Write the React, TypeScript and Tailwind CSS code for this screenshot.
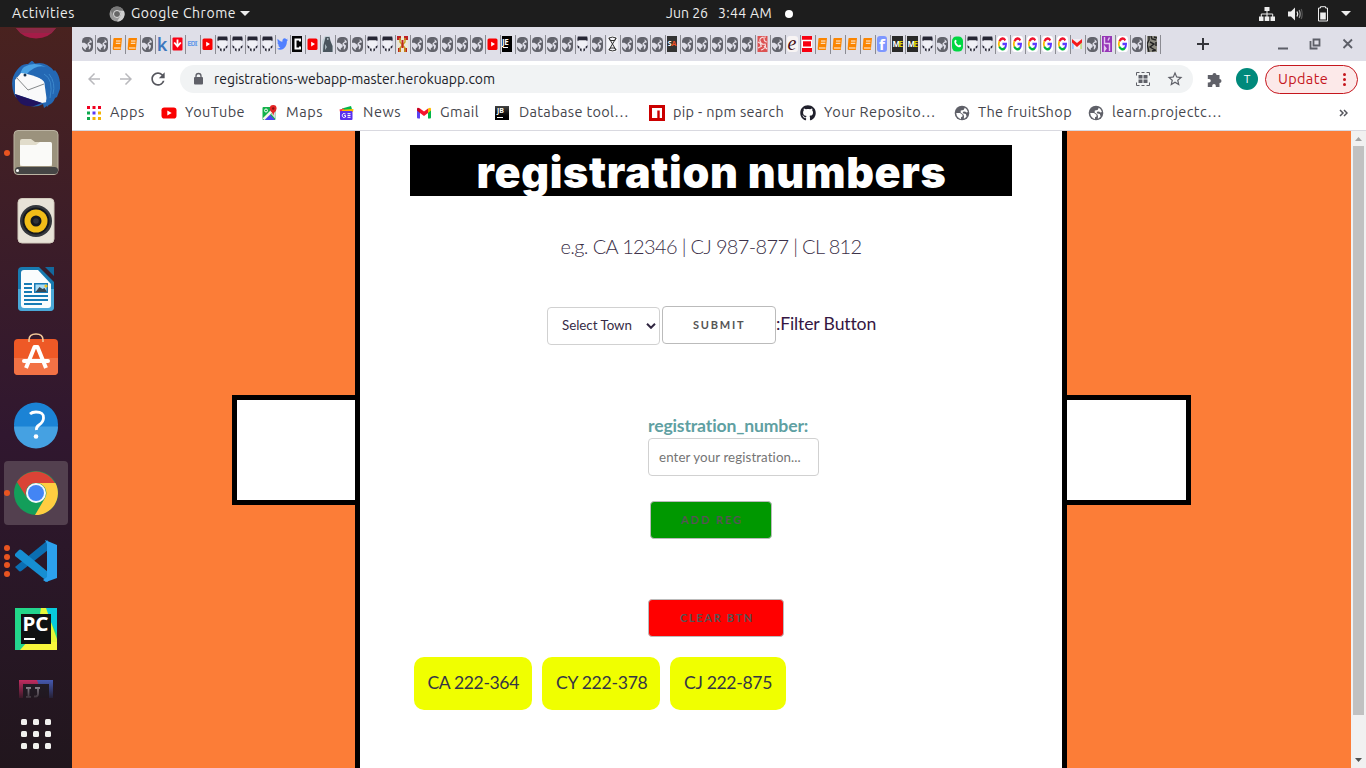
import React, { useLayoutEffect, useRef, type ReactNode } from 'react';
import { MdArrowBack, MdArrowForward, MdRefresh, MdStarBorder } from 'react-icons/md';
import { FaGithub, FaTwitter } from 'react-icons/fa';

const UI = "font-['Ubuntu','Noto_Sans',sans-serif]";
const LATO = "font-['Lato',sans-serif]";

/* Single-line label whose tracking is adjusted so that it spans exactly `w` pixels. */
function Fit({ w, className = '', children }: { w: number; className?: string; children: string }) {
  const ref = useRef<HTMLSpanElement>(null);
  useLayoutEffect(() => {
    const el = ref.current;
    if (!el) return;
    el.style.letterSpacing = '0px';
    const natural = el.getBoundingClientRect().width;
    el.style.letterSpacing = `${(w - natural) / children.length}px`;
  }, [w, children]);
  return (
    <span ref={ref} className={`inline-block shrink-0 whitespace-pre ${className}`}>
      {children}
    </span>
  );
}

function GoogleG() {
  return (
    <svg viewBox="0 0 16 16" preserveAspectRatio="none" className="h-4 w-[11px]">
      <rect width="16" height="16" rx="4" fill="#fff" />
      <g fill="none" strokeWidth="2.6">
        <path d="M12.2 4.4A5.4 5.4 0 0 0 3.4 5.4" stroke="#f0102a" />
        <path d="M3.4 5.2a5.4 5.4 0 0 0 0 5.6" stroke="#fbbc05" />
        <path d="M3.3 10.6a5.4 5.4 0 0 0 8.4 1.2" stroke="#00b83c" />
        <path d="M8 8h5.2a5.4 5.4 0 0 1-1.8 4" stroke="#5a38ff" />
      </g>
    </svg>
  );
}

function TabIcon({ k }: { k: string }) {
  switch (k) {
    case 'g':
      return (
        <svg viewBox="0 0 11 15" className="h-[15px] w-[11px]">
          <rect width="11" height="15" rx="4.5" fill="#62636b" />
          <path d="M0 5.800H2.500L5.600 8V10L3.800 11.200V13L2.300 12.200 0 9.500Z" fill="#dfdfe8" />
          <path d="M7.600 2.200 9.800 4.500V5.600L7.400 6 7 7 9 8.600 8.600 10.800 7.400 12.600 6.600 12.200 7 9.800 5.600 8 5.600 6.200 7.800 4.400Z" fill="#dfdfe8" />
        </svg>
      );
    case 'b':
      return (
        <svg viewBox="0 0 11 14" className="h-[14px] w-[11px]">
          <path d="M2.2 1H10L8.8 13H1.6Q.6 13 .7 11.6L1.4 2Q1.5 1 2.2 1Z" fill="#fb8500" />
          <path d="M4 4h4.500M3.800 6.300h4.500M2 11h6.500" stroke="#fff" strokeWidth=".9" />
        </svg>
      );
    case 'k':
      return <span className="text-[18px] leading-4 font-semibold text-[#3c78be] font-['Noto_Sans',sans-serif]">k</span>;
    case 'd':
      return (
        <svg viewBox="0 0 11 14" className="h-[14px] w-[11px]">
          <rect x=".5" width="10" height="13" y=".5" rx="1" fill="#fa0012" />
          <path d="M5.5 2.5v6M2.200 5.500l3.300 3.800 3.300-3.800" stroke="#fff" strokeWidth="1.800" fill="none" />
        </svg>
      );
    case 'i':
      return <span className="text-[7px] leading-4 font-bold tracking-[-0.8px] text-[#699ce8] font-['Noto_Sans',sans-serif]">EDI</span>;
    case 'y':
      return (
        <svg viewBox="0 0 11 14" className="h-[14px] w-[11px]">
          <rect x=".5" y="1.5" width="10" height="11.5" rx="1.5" fill="#f80000" />
          <path d="M4.2 4.8v4.6L8 7.1z" fill="#fff" />
        </svg>
      );
    case 'o':
      return (
        <svg viewBox="0 0 11 16" className="h-4 w-[11px]">
          <path d="M2.500 3.500Q.2 6 1.600 10l2 1V15h3.800v-4l2-1Q10.800 6 8.500 3.500z" fill="#f1f1f6" />
          <path d="M.8.5H10.200Q10.900 2.500 10.400 5L8.800 4.200H2.200L.6 5Q.1 2.500.8.500ZM.3 9.300l2 1.300v2.200L.8 11.800ZM10.700 9.300l-2 1.300v2.200l1.500-1ZM3 12.500h1.600V15.500L3 14.500zM8 12.500H6.400V15.500L8 14.500z" fill="#252533" />
        </svg>
      );
    case 't':
      return <FaTwitter className="h-[14px] w-[11px] text-[#5080ff]" preserveAspectRatio="none" />;
    case 'c':
      return (
        <svg viewBox="0 0 10 16" className="h-4 w-[10px]">
          <rect width="10" height="16" fill="#060606" />
          <path d="M8 5.500V3.500H3.500v9H8V10.500" fill="none" stroke="#fff" strokeWidth="2" />
        </svg>
      );
    case 'w':
      return (
        <svg viewBox="0 0 11 16" className="h-4 w-[11px]">
          <path d="M0 5l3-5h5v5l3 5v6H0z" fill="#c4d0d6" />
          <path d="M3.500 1h4l1 4 2 5v6H1L1.500 9z" fill="#4a555d" />
          <path d="M5 2h1.500v2H5zM3 8l2 3-2 3z" fill="#a8b6bc" />
        </svg>
      );
    case 'x':
      return (
        <svg viewBox="0 0 11 16" className="h-4 w-[11px]">
          <rect width="11" height="16" fill="#ece8d6" />
          <path d="M0 0h4v4H0zM7 0h4v4H7zM1 12h3v4H1zM7 12h3v4H7z" fill="#bd2024" />
          <path d="M3 2v4l5 6v4M8 2v4l-5 6v4" stroke="#c9a51c" strokeWidth="1.4" fill="none" />
          <path d="M4.5 4h2v8h-2z" fill="#c22525" />
        </svg>
      );
    case 'j':
      return (
        <span className="flex h-4 w-[10px] flex-col items-start overflow-hidden bg-black text-[8px] leading-[11px] font-bold tracking-[-0.5px] text-white font-['Noto_Sans',sans-serif]">
          JE
          <span className="ml-px block h-px w-[5px] bg-white" />
        </span>
      );
    case 'h':
      return (
        <svg viewBox="0 0 11 16" className="h-4 w-[11px]">
          <rect width="11" height="16" rx="4" fill="#f4f4f8" />
          <path d="M1.800 2Q5.500.2 9.200 2M1.800 14Q5.500 15.800 9.200 14M2 2 9 14M9 2 2 14M2 2l1 2.500h5L9 2M2 14l1.500-2h4L9 14" fill="none" stroke="#333" strokeWidth="1" />
        </svg>
      );
    case 's':
      return (
        <span className="flex h-4 w-[10px] items-center justify-center bg-[#333] text-[7px] font-bold text-white font-['Noto_Sans',sans-serif]">
          S<span className="text-[#f05023]">A</span>
        </span>
      );
    case 'r':
      return (
        <svg viewBox="0 0 11 16" className="h-4 w-[11px]">
          <rect x=".5" width="10" height="16" fill="#dc5252" />
          <path d="M9 1Q2 1 3 5t5 3q2 4-4 6M1 6q3 1 3 4M7 2q0 4 3 4M7 10l3 3M1 12l4-2" stroke="#f5dede" fill="none" strokeWidth="1.1" />
        </svg>
      );
    case 'e':
      return (
        <span className="flex h-4 w-[11px] items-center justify-center rounded-[3px] bg-[#f8f4f4] pb-[3px] text-[20px] leading-4 text-[#481018] italic font-['Liberation_Serif',serif]">e</span>
      );
    case 'z':
      return (
        <svg viewBox="0 0 10 16" className="h-4 w-[10px]">
          <rect width="10" height="16" fill="#f80010" />
          <path d="M0 3.8h10v1.500H0zM0 10.500h10v1.500H0zM0 5h1v6H0zM9 5h1v6H9z" fill="#fff" />
        </svg>
      );
    case 'f':
      return (
        <span className="flex h-4 w-[10px] items-end justify-center rounded-[3px] bg-[#7e97ff] text-[15px] leading-[16px] font-bold text-white font-['Noto_Sans',sans-serif]">f</span>
      );
    case 'm':
      return (
        <span className="flex h-4 w-[11px] items-center justify-center overflow-hidden bg-[#292929] text-[8px] font-bold tracking-[-1.5px] text-white font-['Noto_Sans',sans-serif]">
          M<span className="text-[#d9d900]">E</span>
        </span>
      );
    case 'a':
      return (
        <svg viewBox="0 0 11 16" className="h-4 w-[11px]">
          <rect y=".5" width="11" height="15" rx="4.5" fill="#00d742" />
          <path d="M2.8 4.2Q4 3 4.6 5L4 6.6q1 2 2.7 2.8L8 8.5l1.3 1.2Q8.2 12 6 11 2.4 9 2.3 5.5Z" fill="#fff" />
        </svg>
      );
    case 'G':
      return <GoogleG />;
    case 'M':
      return (
        <svg viewBox="0 0 10 12" className="h-[12px] w-[10px]">
          <rect width="10" height="10" y="1" fill="#f1eef5" />
          <path d="M0 2v9h1.8V3.5z" fill="#98c8ff" />
          <path d="M10 2v9H8.200V3.500z" fill="#c3dc8d" />
          <path d="M0 1l5 4 5-4v3.500L5 9 0 4.500z" fill="#f5191c" />
        </svg>
      );
    case 'p':
      return (
        <svg viewBox="0 0 10 16" className="h-4 w-[10px]">
          <rect width="10" height="16" fill="#9635b7" />
          <path d="M2.500 1v6.500H7.500V15M7.500 1.500 6 4.500M2.500 10.500v4l1.500-2z" stroke="#e4c8f0" strokeWidth="1.400" fill="none" />
        </svg>
      );
    default:
      return (
        <svg viewBox="0 0 10 16" className="h-4 w-[10px]">
          <rect width="10" height="16" fill="#8c8b80" />
          <path d="M2 0v4l-2 4 2 8M4 0l1 3 4 1M3 6l4 2-4 3 5 3M9 6v4M5 15l4-1M7 1l3 1" stroke="#222" strokeWidth="1.400" fill="none" />
        </svg>
      );
  }
}

const TABS = 'ggbbgkdiyooootcywggooxgggggyjggggoghgggsgggggrgezbbbbfmmogaooGGGGGMgpGgn'.split('');

const GlobeIcon = () => (
  <svg viewBox="0 0 16 16" className="size-4">
    <circle cx="8" cy="8" r="7.300" fill="#5f6068" />
    <path d="M2.200 8H6L8.500 9.800V11.600L7 12.200V14.200L4.800 13Q2.200 11 2.200 8Z" fill="#fff" />
    <path d="M10.800 2.800Q13.200 4.200 13.900 7L12.500 7.400 11 6.400 9 6.800 8.800 8.200 11.800 9 12.600 11.400Q11 13.400 9.800 13.700L10 11 9.400 9.400 6.600 7.600 6.800 5.600 9.600 5Z" fill="#fff" />
  </svg>
);

const BOOKMARKS: { name: string; slot: string; w: number; icon: ReactNode }[] = [
  {
    name: 'Apps', slot: 'w-[75px]', w: 35,
    icon: (
      <svg viewBox="0 0 16 16" className="size-4">
        <path d="M1 1h3v3H1zM6.500 1h3v3h-3zM12 1h3v3h-3z" fill="#f00020" />
        <path d="M1 6.500h3v3H1zM1 12h3v3H1z" fill="#0ca84c" />
        <path d="M6.500 6.500h3v3h-3z" fill="#5a35f5" />
        <path d="M12 6.500h3v3h-3zM6.500 12h3v3h-3zM12 12h3v3h-3z" fill="#f4b400" />
      </svg>
    ),
  },
  {
    name: 'YouTube', slot: 'w-[101px]', w: 60,
    icon: (
      <svg viewBox="0 0 16 16" className="size-4">
        <rect x=".5" y="2.500" width="15" height="11" rx="2.800" fill="#fa0000" />
        <path d="M6.300 5.500v5L10.700 8z" fill="#fff" />
      </svg>
    ),
  },
  {
    name: 'Maps', slot: 'w-[77px]', w: 37,
    icon: (
      <svg viewBox="0 0 16 16" className="size-4">
        <rect x=".5" y="2" width="13" height="13" rx="1" fill="#12b24a" />
        <path d="M2 15 7.500 9 13 15z" fill="#4b45f0" />
        <path d="M.5 13.500 11 3l2 2L2.500 15z" fill="#f6f6ea" />
        <path d="M9 9l4.500 5V6z" fill="#d8dde0" />
        <circle cx="4" cy="5.500" r="1.500" fill="none" stroke="#fff" />
        <path d="M11.200 0a3.400 3.400 0 0 1 3.400 3.400Q14.500 6 12 8l-.8 2.500L10.400 8Q7.800 6 7.800 3.400A3.400 3.400 0 0 1 11.200 0Z" fill="#e32424" />
        <circle cx="11.200" cy="3.500" r="1.200" fill="#8e1010" />
      </svg>
    ),
  },
  {
    name: 'News', slot: 'w-[77px]', w: 38,
    icon: (
      <svg viewBox="0 0 16 16" className="size-4">
        <path d="M3 3.500l9-2.500 1.500 5H3z" fill="#00b74a" />
        <path d="M.5 4.500 5 3.500V7H1z" fill="#ff3340" />
        <path d="M3 4.800l11.500-.8L14 7H3z" fill="#ffba00" />
        <rect x="1" y="6" width="12.500" height="9" rx="1" fill="#5a30ee" />
        <path d="M6.500 9Q3.300 7.700 3.300 10.500T6.500 12v-1.500H5.200M11.500 8.700H8.500M11.500 10.500H8.500M11.500 12.300H8.500" stroke="#fff" fill="none" />
      </svg>
    ),
  },
  {
    name: 'Gmail', slot: 'w-[79px]', w: 39,
    icon: (
      <svg viewBox="0 0 16 16" className="size-4">
        <path d="M1 4v8.500q0 1 1 1h2V6z" fill="#5a42f3" />
        <path d="M15 4v8.500q0 1-1 1h-2V6z" fill="#00b748" />
        <path d="M12 3.500V8l3-2.500V4q0-2-3-.5z" fill="#fbbc04" />
        <path d="M4 8V3.500L8 6.600l4-3.100V8l-4 3z" fill="#f7142d" />
        <path d="M1 5.500 4 8V3.500Q1 2 1 4z" fill="#c90021" />
      </svg>
    ),
  },
  {
    name: 'Database tool…', slot: 'w-[154px]', w: 110,
    icon: (
      <span className="flex h-[14px] w-[14px] flex-col bg-gradient-to-b from-[#444] to-black pl-[2px] text-[7px] leading-[9px] font-bold text-white font-['Noto_Sans',sans-serif]">
        JB
        <span className="mt-[2px] block h-px w-[6px] shrink-0 bg-white" />
      </span>
    ),
  },
  {
    name: 'pip - npm search', slot: 'w-[151px]', w: 111,
    icon: (
      <svg viewBox="0 0 16 16" className="size-4">
        <rect width="16" height="16" fill="#cb0000" />
        <path d="M3 3h10v10h-2.300V5.500H8.300V13H3z" fill="#fff" />
      </svg>
    ),
  },
  { name: 'Your Reposito…', slot: 'w-[154px]', w: 112, icon: <FaGithub className="size-4 text-[#20202c]" /> },
  { name: 'The fruitShop', slot: 'w-[134px]', w: 94, icon: <GlobeIcon /> },
  { name: 'learn.projectc…', slot: 'w-[140px]', w: 110, icon: <GlobeIcon /> },
];

function TopBar() {
  return (
    <header className={`grid h-[27px] shrink-0 grid-cols-[1fr_auto_1fr] items-center bg-[#1d1d1d] text-[14px] leading-[27px] text-[#ededed] ${UI}`}>
      <div className="flex items-center pl-3">
        <Fit w={63}>Activities</Fit>
        <svg viewBox="0 0 16 16" className="ml-[34px] size-4">
          <circle cx="8" cy="8" r="7.500" fill="#999" />
          <path d="M1.500 4.200A7.500 7.500 0 0 1 14.500 4.200H8a4 4 0 0 0-3.500 5.700z" fill="#777" />
          <path d="M15 5a7.500 7.500 0 0 1-7 10.500L11.500 10A4 4 0 0 0 10.700 5z" fill="#cfcfcf" />
          <circle cx="8" cy="8" r="3.500" fill="#666" stroke="#ddd" />
        </svg>
        <Fit w={105} className="ml-[6px]">Google Chrome</Fit>
        <svg viewBox="0 0 10 5" className="ml-[4px] h-[5px] w-[10px]"><path d="M0 0h10L5 5z" fill="#ededed" /></svg>
      </div>
      <div className="flex items-center pl-[93px]">
        <Fit w={42}>Jun 26</Fit>
        <Fit w={54} className="ml-[10px]">3:44 AM</Fit>
        <span className="ml-[13px] size-2 rounded-full bg-white" />
      </div>
      <div className="flex items-center justify-end pr-[15px]">
        <svg viewBox="0 0 16 14" className="h-[14px] w-4" fill="#ededed">
          <path d="M5.500 0h5v4h-5zM0 9.500h4.500V14H0zM5.700 9.500h4.600V14H5.700zM11.500 9.500H16V14h-4.500z" />
          <path d="M8 3v7M2.300 10V7h11.400v3" stroke="#ededed" fill="none" />
        </svg>
        <svg viewBox="0 0 15 14" className="ml-[13px] h-[14px] w-[15px]">
          <path d="M0 4.500h3l4-4v13l-4-4H0z" fill="#ededed" />
          <path d="M9 4.500q1.500 2.500 0 5" stroke="#ededed" strokeWidth="1.300" fill="none" />
          <path d="M11.200 3q2 4 0 8" stroke="#999" strokeWidth="1.200" fill="none" />
          <path d="M13.200 2q2 5 0 10" stroke="#555" strokeWidth="1.200" fill="none" />
        </svg>
        <svg viewBox="0 0 10 16" className="ml-[15px] h-4 w-[10px]">
          <path d="M2.500 2V.7h5V2h2v13H.5V2z" fill="none" stroke="#ededed" />
          <path d="M2.200 6.500h5.600v7H2.200z" fill="#ededed" />
        </svg>
        <svg viewBox="0 0 10 5" className="ml-[13px] h-[5px] w-[10px]"><path d="M0 0h10L5 5z" fill="#ededed" /></svg>
      </div>
    </header>
  );
}

const DOCK: { id: string; dots?: number; active?: boolean; art: ReactNode }[] = [
  {
    id: 'mail',
    art: (
      <>
        <path d="M5 9Q10 2 16 3L20 -.500l3 3Q34 0 42 10l1-1q6 7 5 19l-3 8-2 1q-2 6-7 7l-4 3-1-4q-9 5-17 0l2-3Q5 41 2 33-3 19 5 9Z" fill="#2468b4" />
        <path d="M12 6Q22 0 34 6 24 3 15 13L9 19Q7 10 12 6Z" fill="#4aa2e4" />
        <path d="M3 19 9 12Q19 13 32 19l3 22-5 1L3 33Z" fill="#f9f9fa" />
        <path d="M4 16l12 13 16-6" fill="none" stroke="#85888a" />
        <path d="M20 13Q30 4 42 11 50 24 42 38L35 46l-1-6Q42 22 20 13Z" fill="#2468b4" />
        <path d="M32 13q10 5 6 24M37 13q7 9 4 20" stroke="#3c88cc" fill="none" />
        <path d="M3 33l27 9-8 3Q7 47 3 33z" fill="#21145f" />
        <circle cx="13" cy="14" r="1.500" fill="#17304b" />
      </>
    ),
  },
  {
    id: 'files', dots: 1,
    art: (
      <>
        <rect x="2" y="1.500" width="44" height="44" rx="4" fill="#9b927d" stroke="#bcb4a3" />
        <path d="M8 37V12q0-2 2-2h9l4 3h15q2 0 2 2v22z" fill="#e1dccb" />
        <path d="M8 16h16l4-3h10q2 0 2 3v18q0 3-3 3H11q-3 0-3-3z" fill="#fafaf8" />
        <rect x="3" y="38" width="43" height="7" rx="3.500" fill="#454545" />
        <circle cx="5.500" cy="41.500" r="1.500" fill="#fff" />
      </>
    ),
  },
  {
    id: 'music',
    art: (
      <>
        <rect x="6" y="1.500" width="36" height="44.500" rx="4" fill="#e7e2d7" stroke="#d1cabc" />
        <circle cx="24" cy="24" r="16" fill="#34373c" />
        <circle cx="24" cy="24" r="13.500" fill="#15181d" />
        <circle cx="24" cy="24" r="11.500" fill="#f1bd18" />
        <circle cx="24" cy="24" r="5.500" fill="#15191e" />
        <circle cx="24" cy="24" r="2.800" fill="#303339" />
      </>
    ),
  },
  {
    id: 'writer',
    art: (
      <>
        <path d="M10 2h17l15 15v25q0 4-4 4H10q-4 0-4-4V6q0-4 4-4z" fill="#187ab0" />
        <path d="M6 24h36v18q0 4-4 4H10q-4 0-4-4z" fill="#4aa8d8" />
        <path d="M12 5h14l13 14v21q0 3-3 3H12q-3 0-3-3V8q0-3 3-3z" fill="#fafcfd" />
        <path d="M33 2h9v9z" fill="#13699d" />
        <path d="M12 19h8M12 23h8M12 27h8M12 31h24M12 35h24M12 39h18" stroke="#167bb5" strokeWidth="2" />
        <rect x="22" y="18" width="14" height="10" fill="#187ab5" />
        <path d="M23.500 19.500h11v7h-11z" fill="#a8dcf6" />
        <path d="M23.500 27l4-5 3 2 2-1 2 3v1z" fill="#374753" />
        <circle cx="34" cy="21" r="1.600" fill="#f2c21c" />
      </>
    ),
  },
  {
    id: 'software',
    art: (
      <>
        <rect x="2" y="6" width="44" height="36" rx="4" fill="#ee5926" />
        <path d="M2 25h44v13q0 4-4 4H6q-4 0-4-4z" fill="#f27245" />
        <path d="M17 9V7q0-6 7-6t7 6v2" fill="none" stroke="#f3c899" strokeWidth="1.600" />
        <path d="M14 35l8.500-21h3L34 35" fill="none" stroke="#fff" strokeWidth="4" strokeLinejoin="round" />
        <path d="M12 28h24" stroke="#fff" strokeWidth="4" strokeLinecap="round" />
      </>
    ),
  },
  {
    id: 'help',
    art: (
      <>
        <circle cx="24" cy="23.500" r="22" fill="#1b83d5" />
        <path d="M2 25.500h44a22 22 0 0 1-44 0z" fill="#45a1e2" />
        <path d="M18 13q2-2 6-2 8 0 7.500 6 0 4-4.500 7-3 2-2.500 5" stroke="#fff" strokeWidth="2.800" fill="none" />
        <circle cx="24" cy="35.500" r="2.300" fill="#fff" />
      </>
    ),
  },
  {
    id: 'browser', dots: 1, active: true,
    art: (
      <>
        <circle cx="24" cy="24" r="22" fill="#139e5a" />
        <path d="M5 13A22 22 0 0 1 43 14H24A10 10 0 0 0 15 29z" fill="#da4336" />
        <path d="M43.500 14A22 22 0 0 1 23 46l10-17A10 10 0 0 0 24 14z" fill="#ffcd41" />
        <circle cx="24" cy="24" r="10" fill="#f4f7fc" />
        <circle cx="24" cy="24" r="8" fill="#4385f4" />
      </>
    ),
  },
  {
    id: 'editor', dots: 4,
    art: (
      <>
        <path d="M3 30l4 4q1 1 3-.5L36 13V3z" fill="#0b6eb2" />
        <path d="M3 17l4-4q1-1 3 .5L36 35v10L3 19z" fill="#168ed2" />
        <path d="M33 3l12 5v33l-11 4-3-2 4-3V7z" fill="#2ca1ed" />
      </>
    ),
  },
  {
    id: 'python',
    art: (
      <>
        <rect x="3" y="3" width="42" height="42" fill="#22d789" />
        <path d="M31 3h14v25z" fill="#08cbdc" />
        <path d="M28 3h6l11 31v11H8z" fill="#e6f638" />
        <path d="M3 36 17 3h12l-7 42H3z" fill="#24d48e" />
        <path d="M8 45l7-8h30v8z" fill="#f8f63b" />
        <rect x="9" y="9" width="30" height="30" fill="#101112" />
        <text x="10.500" y="26" fontSize="19" fontWeight="700" fill="#fff" fontFamily="Noto Sans" textLength="26" lengthAdjust="spacingAndGlyphs">PC</text>
        <path d="M12 34h11" stroke="#fff" strokeWidth="2" />
      </>
    ),
  },
];

function Dock() {
  return (
    <aside className="flex w-[72px] shrink-0 flex-col overflow-hidden bg-gradient-to-b from-[#49221f] via-[#30172f] via-55% to-[#21161d]">
      <svg viewBox="0 0 72 24" className="h-6 w-[72px] shrink-0">
        <path d="M16 1Q23 11.500 36 11.500T56 1z" fill="#a51c48" />
        <path d="M16 1h40L51 6H21z" fill="#8b2946" />
      </svg>
      {DOCK.map(({ id, dots = 0, active, art }) => (
        <div key={id} className="flex h-[68px] shrink-0 items-center justify-center">
          <div className={`relative flex size-16 items-center justify-center rounded ${active ? 'bg-[#53404f]' : ''}`}>
            <svg viewBox="0 0 48 48" className="size-12">{art}</svg>
            <div className="absolute inset-y-0 left-0 flex flex-col items-center justify-center gap-[2.5px]">
              {Array.from({ length: dots }, (_, i) => <span key={i} className="size-[6px] rounded-full bg-[#e95420]" />)}
            </div>
          </div>
        </div>
      ))}
      <svg viewBox="0 0 34 18" className="mt-[17px] ml-[19px] h-[18px] w-[34px] shrink-0">
        <defs>
          <linearGradient id="ideFade" x2="0" y2="1"><stop stopColor="#21161f" stopOpacity="0" /><stop offset="1" stopColor="#21161f" stopOpacity=".85" /></linearGradient>
        </defs>
        <path d="M0 0h34v18H0z" fill="#c22c60" />
        <path d="M18 0h16v18H24z" fill="#4559b0" />
        <path d="M4 4h26v14H4z" fill="#211d26" />
        <path d="M7 8h5M9.500 8v9M7 17h5M16 8h5M19 8v6q0 3-4 2.500" stroke="#bbb6be" strokeWidth="1.800" fill="none" />
        <rect width="34" height="18" fill="url(#ideFade)" />
      </svg>
      <div className="mt-[21px] grid grid-cols-3 gap-[6px] self-center">
        {Array.from({ length: 9 }, (_, i) => <span key={i} className="size-[6px] rounded-[1.5px] bg-[#f1f0ee]" />)}
      </div>
    </aside>
  );
}

function TabStrip() {
  return (
    <div className="flex h-[34px] shrink-0 items-center bg-[#dfdfe8] pl-[9px]">
      {TABS.map((k, i) => (
        <div key={i} className="flex h-[19px] w-[15px] shrink-0 items-center justify-center border-r border-[#8b8b92] pr-[2px]">
          <TabIcon k={k} />
        </div>
      ))}
      <svg viewBox="0 0 12 12" className="ml-9 size-3"><path d="M6 0v12M0 6h12" stroke="#34353b" strokeWidth="2" /></svg>
      <svg viewBox="0 0 90 14" className="ml-[66px] h-[14px] w-[90px]" fill="none" stroke="#5d5f68" strokeWidth="1.800">
        <path d="M3 11.500h10M38.500 2.500h6v6h-6zM35.500 4v7.500h7M68.500 2.500l8.500 8.500M77 2.500l-8.500 8.500" />
      </svg>
    </div>
  );
}

function Toolbar() {
  return (
    <div className={`flex h-9 shrink-0 items-center bg-white pl-[13px] text-[14px] ${UI}`}>
      <MdArrowBack className="size-[18px] text-[#b9b9bd]" />
      <MdArrowForward className="ml-[14px] size-[18px] text-[#b9b9bd]" />
      <MdRefresh className="ml-[13px] size-5 text-[#55565d]" />
      <div className="ml-3 flex h-7 w-[1013px] items-center rounded-full bg-[#f1f3f4] pl-3">
        <svg viewBox="0 0 13 14" className="h-[14px] w-[13px]">
          <rect x="2" y="5" width="9" height="7.500" rx="1" fill="#5f6068" />
          <path d="M4 5.500V4a2.500 2.500 0 0 1 5 0v1.500" fill="none" stroke="#5f6068" strokeWidth="1.300" />
        </svg>
        <Fit w={281} className="ml-[9px] text-[#201c28]">registrations-webapp-master.herokuapp.com</Fit>
        <svg viewBox="0 0 14 14" className="ml-auto size-[14px]" fill="none" stroke="#5f6068" strokeWidth="1">
          <path d="M3.500 .5H.5V3.500M10.500 .5h3V3.500M3.500 13.500H.5V10.500M10.500 13.500h3V10.500M5.500 .5h3M5.500 13.500h3" />
          <path d="M2.500 3h4v3.500h-4zM7.500 3h4v3.500h-4zM2.500 7.500h4V11h-4zM7.500 7.500h4V11h-4z" fill="#5f6068" stroke="none" />
        </svg>
        <MdStarBorder className="mr-[9px] ml-4 size-[18px] text-[#5f6068]" />
      </div>
      <svg viewBox="0 0 17 17" className="ml-[13px] size-[17px]">
        <path d="M2.500 4h4a2 2 0 1 1 4 0h3v4a2 2 0 1 1 0 4v4H9.800v-1.200a1.800 1.800 0 0 0-3.600 0V16H1.800V11.500h1.200a1.800 1.800 0 0 0 0-3.600H1.800V4z" fill="#5f6068" />
      </svg>
      <span className="ml-[13px] flex size-[22px] items-center justify-center rounded-full bg-[#00897b] text-[12px] leading-none text-white">T</span>
      <div className="ml-[7px] flex h-[29px] w-[93px] items-center rounded-full border border-[#c5161d] bg-[#fce9e9] pl-3 text-[14.5px] text-[#c5161d]">
        <Fit w={50}>Update</Fit>
        <span className="ml-[15px] flex flex-col gap-[2px]">
          <i className="size-[3px] rounded-full bg-[#c5161d]" />
          <i className="size-[3px] rounded-full bg-[#c5161d]" />
          <i className="size-[3px] rounded-full bg-[#c5161d]" />
        </span>
      </div>
    </div>
  );
}

function BookmarksBar() {
  return (
    <div className={`flex h-[34px] shrink-0 items-center border-b border-[#d9d9e0] bg-white pb-[2px] pl-[14px] text-[14.5px] leading-5 text-[#45464d] ${UI}`}>
      {BOOKMARKS.map((b) => (
        <div key={b.name} className={`flex shrink-0 items-center ${b.slot}`}>
          <span className="flex w-6 shrink-0 [&>svg]:shrink-0">{b.icon}</span>
          <Fit w={b.w} className="mb-[2px]">{b.name}</Fit>
        </div>
      ))}
      <svg viewBox="0 0 9 8" className="mr-[18px] ml-auto h-2 w-[9px]" fill="none" stroke="#55565d" strokeWidth="1.500">
        <path d="M1 1l3 3-3 3M5 1l3 3-3 3" />
      </svg>
    </div>
  );
}

const BTN = 'flex items-center border rounded-[4px] h-[38px] text-[11px] font-bold text-[#555] border-[#bbb]';

function Page() {
  return (
    <main className={`flex min-h-0 flex-1 bg-[#fc7d37] ${LATO}`}>
      <div className="flex w-[283px] shrink-0 justify-end pt-[264px]">
        <div className="h-[110px] w-[123px] border-[5px] border-r-0 border-black bg-white" />
      </div>
      <div className="flex w-[712px] shrink-0 flex-col border-x-[5px] border-black bg-white text-[#362b45]">
        <h1 className="mt-[14px] ml-[50px] flex h-[51px] w-[602px] justify-center bg-black pl-px text-[43px] leading-[54px] font-black text-white font-['Arial_Black','Inter',sans-serif]">
          <Fit w={470}>registration numbers</Fit>
        </h1>
        <p className="mt-[37px] flex justify-center text-[20px] leading-[26px] font-light text-[#3b3048]">
          <Fit w={301}>e.g. CA 12346 | CJ 987-877 | CL 812</Fit>
        </p>
        <div className="mt-[47px] ml-[187px] flex">
          <div className="mt-px flex h-[38px] w-[113px] items-center justify-between rounded-[4px] border border-[#d1d1d1] pr-[3px] pl-[14px] text-[13.33px]">
            <Fit w={70}>Select Town</Fit>
            <svg viewBox="0 0 10 6" className="h-[6px] w-[10px]"><path d="M1 .8l4 4 4-4" fill="none" stroke="#302640" strokeWidth="2" /></svg>
          </div>
          <button className={`${BTN} ml-[2px] w-[114px] pl-[30px]`}><Fit w={52.5}>SUBMIT</Fit></button>
          <Fit w={99.5} className="text-[17.6px] leading-[36px] text-[#351642]">:Filter Button</Fit>
        </div>
        <div className="mt-[68px] ml-[288px]">
          <label className="block text-[17.6px] leading-[25px] font-bold text-[#5fa0a2]"><Fit w={160.5}>registration_number:</Fit></label>
          <div className="flex h-[38px] w-[171px] items-center rounded-[4px] border border-[#d1d1d1] pt-px pl-[10px] text-[13.33px] text-[#757575]">
            <Fit w={142}>enter your registration...</Fit>
          </div>
          <button className={`${BTN} mt-[25px] ml-[2px] w-[122px] bg-[#009800] pt-px pl-[30px]`}><Fit w={62}>ADD REG</Fit></button>
          <button className={`${BTN} mt-[60px] w-[136px] bg-[#ff0000] pt-px pl-[31px]`}><Fit w={74}>CLEAR BTN</Fit></button>
        </div>
        <div className="mt-5 ml-[54px] flex gap-[10px] text-[17.6px] leading-[52px] text-[#353545]">
          <span className="h-[53px] w-[118px] rounded-[10px] bg-[#f0ff00] pl-[13.5px]"><Fit w={91.5}>CA 222-364</Fit></span>
          <span className="h-[53px] w-[118px] rounded-[10px] bg-[#f0ff00] pl-[14px]"><Fit w={91.5}>CY 222-378</Fit></span>
          <span className="h-[53px] w-[116px] rounded-[10px] bg-[#f0ff00] pl-[14px]"><Fit w={88}>CJ 222-875</Fit></span>
        </div>
      </div>
      <div className="flex-1 pt-[264px]">
        <div className="h-[110px] w-[124px] border-[5px] border-l-0 border-black bg-white" />
      </div>
      <div className="flex w-[15px] shrink-0 flex-col items-center bg-[#f1f1f1]">
        <svg viewBox="0 0 7 4" className="mt-[6px] h-1 w-[7px]"><path d="M0 4h7L3.500 0z" fill="#a3a3a3" /></svg>
        <div className="mt-[5px] h-[569px] w-[11px] bg-[#c1c1c1]" />
        <svg viewBox="0 0 7 4" className="mt-auto mb-[6px] h-1 w-[7px]"><path d="M0 0h7L3.500 4z" fill="#505050" /></svg>
      </div>
    </main>
  );
}

export default function App() {
  return (
    <div className="flex h-[768px] w-[1366px] flex-col overflow-hidden">
      <TopBar />
      <div className="flex min-h-0 flex-1">
        <Dock />
        <div className="flex min-w-0 flex-1 flex-col">
          <TabStrip />
          <Toolbar />
          <BookmarksBar />
          <Page />
        </div>
      </div>
    </div>
  );
}
